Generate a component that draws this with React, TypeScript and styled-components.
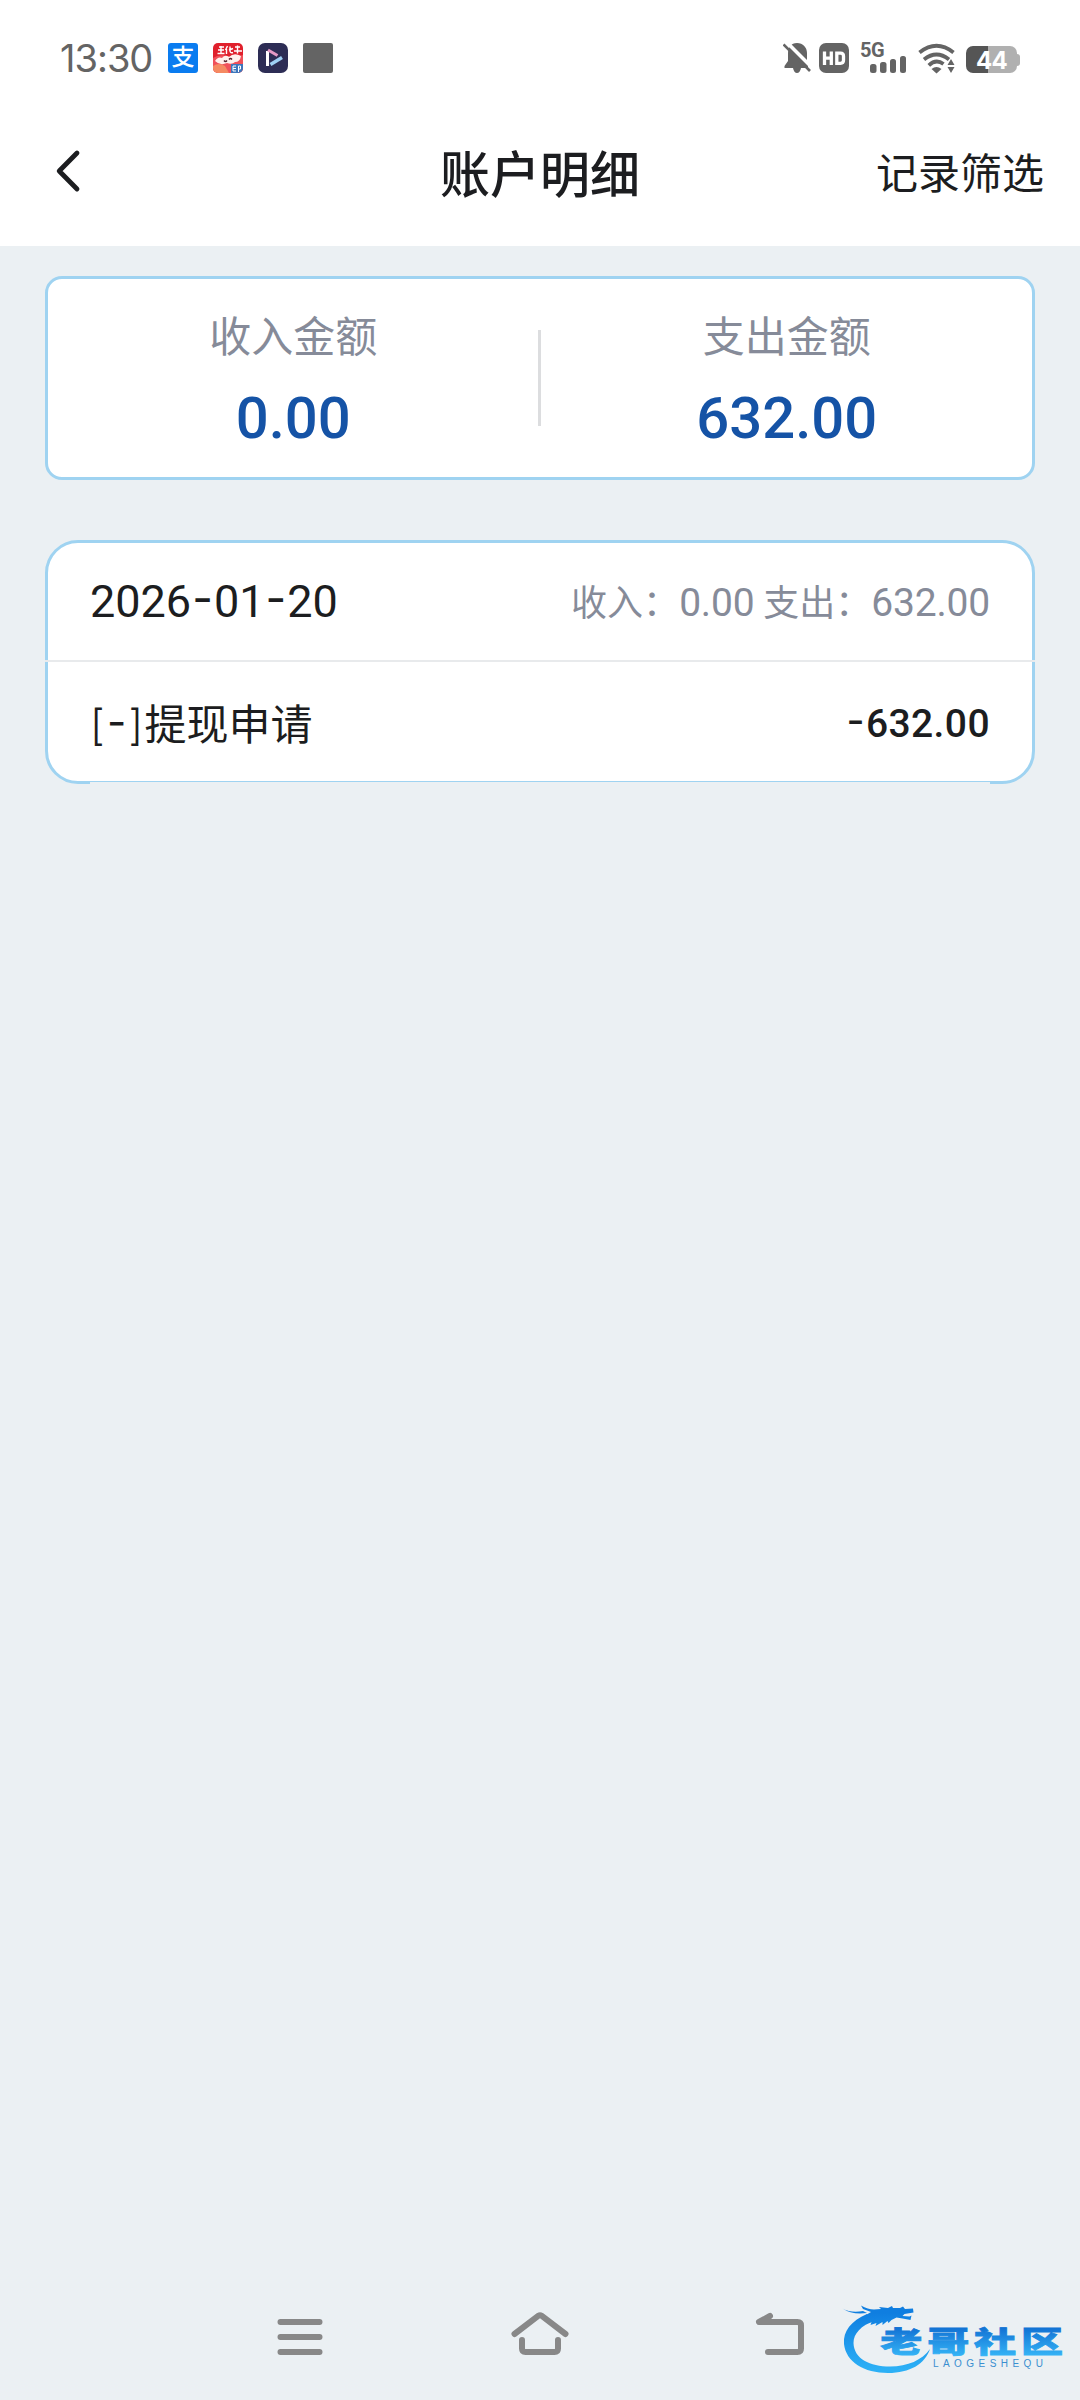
import React from 'react'
import styled, { createGlobalStyle } from 'styled-components'

const colors = {
    page: '#ebf0f3',
    ink: '#1c1d20',
    muted: '#868b99',
    blue: '#1553a6',
    border: '#9fd3f1',
    line: '#e8eaec',
    status: '#646464',
    nav: '#888888',
}

const date = ['2026', '01', '20']

const records = [
    { type: '-', name: '提现申请', amount: '632.00' },
]

export default function App() {
    return (
        <>
            <GlobalStyle />
            <Screen>
                <StatusBar />
                <Header>
                    <BackButton aria-label="back">
                        <svg width="26" height="44" viewBox="0 0 26 44" fill="none" stroke={colors.ink} strokeWidth="4.800" strokeLinecap="round" strokeLinejoin="round">
                            <path d="M22 4 4.200 22 22 40" />
                        </svg>
                    </BackButton>
                    <Title>账户明细</Title>
                    <Filter>记录筛选</Filter>
                </Header>
                <Content>
                    <Summary>
                        <SummaryCol>
                            <Label>收入金额</Label>
                            <Total>0.00</Total>
                        </SummaryCol>
                        <Separator />
                        <SummaryCol>
                            <Label>支出金额</Label>
                            <Total>632.00</Total>
                        </SummaryCol>
                    </Summary>
                    <DayCard>
                        <DayHead>
                            <DayDate>
                                {date[0]}<Dash>-</Dash>{date[1]}<Dash>-</Dash>{date[2]}
                            </DayDate>
                            <DayTotals>
                                收入：<Num>0.00</Num> 支出：<Num>632.00</Num>
                            </DayTotals>
                        </DayHead>
                        <Divider />
                        {records.map(record => (
                            <RecordRow key={record.name}>
                                <RecordName><RecordType>[<Dash>{record.type}</Dash>]</RecordType>{record.name}</RecordName>
                                <RecordAmount><Dash>-</Dash>{record.amount}</RecordAmount>
                            </RecordRow>
                        ))}
                    </DayCard>
                </Content>
                <NavBar />
            </Screen>
        </>
    )
}

function StatusBar() {
    return (
        <StatusWrapper>
            <Clock>13:30</Clock>
            <AppIcons>
                <AlipayIcon>支</AlipayIcon>
                <svg width="30" height="30" viewBox="0 0 30 30">
                    <rect width="30" height="30" rx="5" fill="#e0202c" />
                    <path d="M0 15Q6 11 14 13T30 12V25a5 5 0 0 1-5 5H5a5 5 0 0 1-5-5Z" fill="#f0505a" />
                    <path d="M0 23q6-4 12 0l4 7H5a5 5 0 0 1-5-5Z" fill="#f58a62" />
                    <path d="M2 18q3-5 7-3 3-4 7-1 5-5 12-1-1 6-6 6-3 3-8 1-7 3-12-2Z" fill="#fff0ec" />
                    <path d="M6 4h5M5 7h6M4.500 10.500h7M8 3v8M14.500 3l-2 4m1-1v5M17 3.500v4q0 3 3 2M16 7l4-1.500M22 4h5M21 8h8M24.500 2.500v8" stroke="#fff" strokeWidth="1.400" fill="none" />
                    <path d="M11 17.500q1.500 2 3 0m2-1q1.500-2 3 0" stroke="#5a2530" strokeWidth="1.400" fill="none" />
                    <path d="M18 21h12v4a5 5 0 0 1-5 5h-7Z" fill="#3d77bd" />
                    <path d="M23 23h-3v5h3m-3-2.500h3M25.500 29v-6h2v3h-2" stroke="#fff" strokeWidth="1" fill="none" />
                </svg>
                <svg width="30" height="30" viewBox="0 0 30 30">
                    <rect width="30" height="30" rx="7" fill="#2d2d55" />
                    <path d="M9.500 8v15" stroke="#fff" strokeWidth="3" />
                    <path d="M10 7l9.500 5.500" stroke="#e59ac6" strokeWidth="3" />
                    <path d="M12.500 21.500 24 14.500" stroke="#9ed0f5" strokeWidth="3.400" />
                </svg>
                <svg width="30" height="30" viewBox="0 0 30 30">
                    <rect width="30" height="30" rx="2" fill={colors.status} />
                </svg>
            </AppIcons>
            <SystemIcons>
                <svg width="28" height="32" viewBox="0 0 28 32">
                    <path d="M14 1C8 1 5 5.500 5 11v8l-3.500 5v2H10q1 5 4 5t4-5h7v-3l-1-4v-8C24 5.500 20 1 14 1Z" fill={colors.status} />
                    <path d="M3 -.500 29.500 26" stroke="#fff" strokeWidth="3.600" />
                    <path d="M.500 2.500 27 29" stroke={colors.status} strokeWidth="2.600" />
                </svg>
                <HdBadge>
                    <svg width="30" height="30" viewBox="0 0 30 30" fill="none" stroke="#fff" strokeWidth="3.300">
                        <path d="M5.500 8.500v13.500M12.300 8.500v13.500M5.500 15.200H12M17.800 10.100h3.700q3 0 3 3v4.200q0 3-3 3h-3.700Z" />
                    </svg>
                </HdBadge>
                <Signal>
                    <SignalType>5G</SignalType>
                    <svg width="46" height="18" viewBox="0 0 46 18" fill={colors.status}>
                        <rect x="9" y="8" width="6.500" height="9" rx="2.500" />
                        <rect x="19" y="6" width="6.500" height="11" rx="2.500" />
                        <rect x="29" y="3" width="6" height="14" rx="2.500" />
                        <rect x="39" y="0" width="6" height="17" rx="2.500" />
                    </svg>
                </Signal>
                <svg width="38" height="32" viewBox="0 0 38 32" fill="none" stroke={colors.status} strokeWidth="3.800">
                    <path d="M1.500 10.500Q18.500-3 35.500 10.500" />
                    <path d="M6 17.500Q18.500 7.500 31 17.500" />
                    <path d="M10.800 23.300Q18 16.500 25.500 22" />
                    <path d="M13.500 27q5-4 10 0l-5 4.500Z" fill={colors.status} stroke="none" />
                    <path d="M29.500 23 33 17l3.500 6ZM29.500 25l3.500 6 3.500-6Z" fill={colors.status} stroke="none" />
                </svg>
                <Battery>
                    <BatteryLevel>44</BatteryLevel>
                    <BatteryTip />
                </Battery>
            </SystemIcons>
        </StatusWrapper>
    )
}

function NavBar() {
    return (
        <NavWrapper>
            <NavIcon viewBox="0 0 60 60">
                <path d="M10.500 17h39M10.500 32h39M10.500 47h39" />
            </NavIcon>
            <NavIcon viewBox="0 0 60 60">
                <path d="M4.500 29 28.500 10.700q1.500-1 3 0L55.500 29M12 35v8.500q0 3.500 3.500 3.500h29q3.500 0 3.500-3.500V35" />
            </NavIcon>
            <NavIcon viewBox="0 0 60 60">
                <path d="M20 11 9 17h38.500q3.500 0 3.500 3.500v23q0 3.500-3.500 3.500H18" />
            </NavIcon>
            <Watermark />
        </NavWrapper>
    )
}

function Watermark() {
    return (
        <WatermarkWrapper width="232" height="80" viewBox="0 0 232 80">
            <defs>
                <linearGradient id="wm" x1="0" y1="0" x2="0" y2="80" gradientUnits="userSpaceOnUse">
                    <stop offset="0.150" stopColor="#0f7ee0" />
                    <stop offset="0.850" stopColor="#2cb0f6" />
                </linearGradient>
                <linearGradient id="wmText" x1="0" y1="27" x2="0" y2="55" gradientUnits="userSpaceOnUse">
                    <stop offset="0" stopColor="#1272d4" />
                    <stop offset="1" stopColor="#35b4f6" />
                </linearGradient>
            </defs>
            <g fill="url(#wm)">
                <path d="M27 13C11 20 3 30 4 43c2 18 20 29 44 29 22 0 37-9 42-24-8 11-22 17.500-40 17.500C30 65.500 14 58 13.500 42 13.300 33 21 24 35 20Z" />
                <path d="M26 14l5-3-8-3-2-3.500q7 4 13 4l7-.500-2-2 9 1 4-2 1 2 7 0 3-1.500 2 2.500 8-.500.500 4-9 1.500-2 2 7 .500 2-1-1 4.500-8-1.500-6-1-5 2.500-3 3-1-2-5 4v-3l-7 4 1-3-6 2 1-3-7 1Z" />
                <path d="M2.500 7.500q9 5 20.500 2.500l4 2q-15 2-24.500-4.500Z" />
            </g>
            <g transform="scale(1.450 1)">
                <text x="27.800" y="52.300" fontFamily="'Noto Sans CJK SC'" fontWeight="900" fontSize="29" fill="url(#wmText)" stroke="url(#wmText)" strokeWidth="0.800" textLength="126">老哥社区</text>
            </g>
            <text x="93" y="66" fontFamily="'Liberation Sans'" fontSize="10" fill="#3a8fd0" textLength="110">LAOGESHEQU</text>
        </WatermarkWrapper>
    )
}

const GlobalStyle = createGlobalStyle`
    body {
        margin: 0;
        background-color: ${colors.page};
    }
    * {
        box-sizing: border-box;
    }
`
const Screen = styled.div`
    display: flex;
    flex-direction: column;
    width: 1080px;
    height: 2400px;
    background-color: ${colors.page};
    color: ${colors.ink};
    font-family: Roboto, 'Noto Sans CJK SC', sans-serif;
`
const StatusWrapper = styled.div`
    display: flex;
    align-items: center;
    height: 116px;
    padding: 0 60px;
    background-color: white;
    color: ${colors.status};
`
const Clock = styled.div`
    width: 108px;
    font-family: Inter, sans-serif;
    font-size: 38px;
    letter-spacing: -1px;
    white-space: nowrap;
`
const AppIcons = styled.div`
    display: flex;
    gap: 15px;
`
const AlipayIcon = styled.div`
    height: 30px;
    width: 30px;
    border-radius: 3px;
    background-color: #0a7cf0;
    color: white;
    font-size: 23px;
    font-weight: 500;
    line-height: 29px;
    text-align: center;
`
const SystemIcons = styled.div`
    display: flex;
    align-items: center;
    margin-left: auto;
`
const HdBadge = styled.div`
    height: 30px;
    width: 30px;
    margin: 0 12px 0 8px;
    border-radius: 7px;
    background-color: ${colors.status};
`
const Signal = styled.div`
    display: flex;
    flex-direction: column;
    width: 46px;
    margin-right: 11px;
`
const SignalType = styled.div`
    font-size: 20px;
    font-weight: 700;
    line-height: 16px;
    margin: 0 0 -2px -1px;
    letter-spacing: -0.5px;
`
const Battery = styled.div`
    display: flex;
    align-items: center;
    margin: 3px 0 0 10px;
`
const BatteryLevel = styled.div`
    height: 27px;
    width: 51px;
    border-radius: 7px;
    background: linear-gradient(90deg, #555 44%, #b0b0b0 44%);
    color: white;
    font-family: Inter, sans-serif;
    font-size: 24px;
    font-weight: 700;
    line-height: 29px;
    text-align: center;
    letter-spacing: -0.8px;
`
const BatteryTip = styled.div`
    height: 12px;
    width: 3px;
    border-radius: 0 3px 3px 0;
    background-color: #b0b0b0;
`
const Header = styled.header`
    display: grid;
    grid-template-columns: 1fr auto 1fr;
    align-items: center;
    height: 130px;
    padding: 0 36px 16px;
    background-color: white;
`
const BackButton = styled.button`
    display: flex;
    justify-self: start;
    margin: 0 0 4px 19px;
    padding: 0;
    border: 0;
    background: none;
`
const Title = styled.h1`
    margin: 5px 0 0;
    font-size: 50px;
    font-weight: 500;
    line-height: 60px;
`
const Filter = styled.div`
    justify-self: end;
    margin-top: 3px;
    font-size: 42px;
    line-height: 60px;
`
const Content = styled.main`
    flex: 1;
    padding: 30px 45px 0;
`
const Summary = styled.section`
    display: flex;
    align-items: center;
    height: 204px;
    border: 3px solid ${colors.border};
    border-radius: 17px;
    background-color: white;
`
const SummaryCol = styled.div`
    flex: 1;
    display: flex;
    flex-direction: column;
    align-items: center;
    padding-top: 4px;
`
const Separator = styled.div`
    width: 3px;
    height: 96px;
    margin: 0 1px 0 -1px;
    background-color: #dcdddf;
`
const Label = styled.div`
    color: ${colors.muted};
    font-size: 42px;
    line-height: 76px;
`
const Total = styled.div`
    color: ${colors.blue};
    font-size: 58px;
    font-weight: 500;
    line-height: 84px;
`
const DayCard = styled.section`
    position: relative;
    height: 244px;
    margin-top: 60px;
    border: 3px solid ${colors.border};
    border-radius: 33px;
    background-color: white;

    &::after {
        content: '';
        position: absolute;
        left: 42px;
        right: 42px;
        bottom: -3px;
        height: 2px;
        background-color: ${colors.page};
    }
`
const DayHead = styled.div`
    display: flex;
    align-items: center;
    justify-content: space-between;
    height: 117px;
    padding: 0 42px;
`
const Dash = styled.span`
    padding: 0 1px;
    font-family: Inter, sans-serif;
    line-height: 1;
    vertical-align: 3px;
`
const DayDate = styled.div`
    font-size: 45px;
`
const DayTotals = styled.div`
    padding-bottom: 3px;
    color: ${colors.muted};
    font-size: 36px;
`
const Num = styled.span`
    font-size: 39px;
    letter-spacing: -0.2px;
`
const Divider = styled.hr`
    height: 2px;
    margin: 0 -3px;
    border: 0;
    background-color: ${colors.line};
`
const RecordRow = styled.div`
    display: flex;
    align-items: center;
    justify-content: space-between;
    height: 119px;
    padding: 0 42px;
`
const RecordName = styled.div`
    font-size: 42px;
`
const RecordType = styled.span`
    font-family: Inter, sans-serif;
    font-weight: 300;
    letter-spacing: 1.3px;

    ${Dash} {
        font-weight: 400;
    }
`
const RecordAmount = styled.div`
    padding-top: 4px;
    font-size: 39px;
    font-weight: 500;
    letter-spacing: 0.4px;
`
const NavWrapper = styled.nav`
    position: relative;
    display: flex;
    justify-content: center;
    gap: 180px;
    height: 95px;
`
const NavIcon = styled.svg`
    width: 60px;
    height: 60px;
    fill: none;
    stroke: ${colors.nav};
    stroke-width: 6;
    stroke-linecap: round;
    stroke-linejoin: round;
`
const WatermarkWrapper = styled.svg`
    position: absolute;
    right: 8px;
    bottom: 19px;
`
